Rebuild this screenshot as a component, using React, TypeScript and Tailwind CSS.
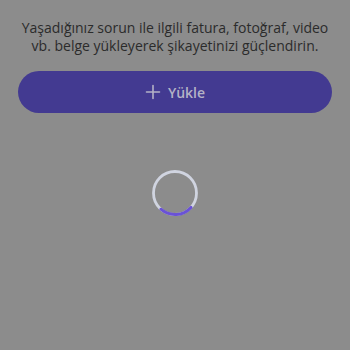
import React from "react";

export default function App() {
  // spinner arc: bottom segment, roughly 42deg..131deg
  const r = 21.5;
  const cx = 24;
  const cy = 24;
  const a1 = (42 * Math.PI) / 180;
  const a2 = (131 * Math.PI) / 180;
  const arc = `M ${cx + r * Math.cos(a1)} ${cy + r * Math.sin(a1)} A ${r} ${r} 0 0 1 ${cx + r * Math.cos(a2)} ${cy + r * Math.sin(a2)}`;

  return (
    <div className="w-[350px] h-[350px] bg-[#8c8c8c] flex flex-col items-center" style={{ fontFamily: '"Open Sans", "Liberation Sans", sans-serif' }}>
      <p className="mt-[19px] px-4 text-center text-[14px] leading-[18px] text-[#2b2b2b]">
        Yaşadığınız sorun ile ilgili fatura, fotoğraf, video
        <br />
        vb. belge yükleyerek şikayetinizi güçlendirin.
      </p>
      <button className="mt-[16px] w-[314px] h-[42px] rounded-full bg-[#433a91] flex items-center justify-center gap-[7px] text-[#b4b2c6] text-[14px] font-semibold">
        <svg width="16" height="16" viewBox="0 0 16 16" className="block">
          <path d="M8 1.5v13M1.5 8h13" stroke="#b4b2c6" strokeWidth="1.6" strokeLinecap="round" />
        </svg>
        <span>Yükle</span>
      </button>
      <svg width="48" height="48" viewBox="0 0 48 48" className="mt-[56px]">
        <circle cx={cx} cy={cy} r={r} fill="none" stroke="#d0d4e0" strokeWidth="2.8" />
        <path d={arc} fill="none" stroke="#6a52d6" strokeWidth="3" strokeLinecap="round" />
      </svg>
    </div>
  );
}
